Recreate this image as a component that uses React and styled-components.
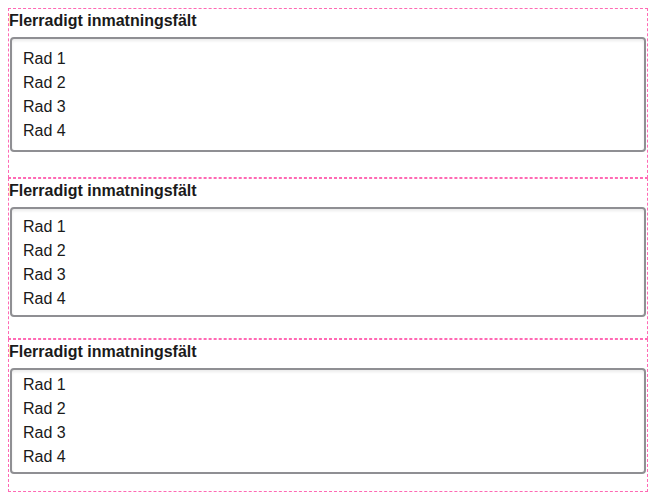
import React from 'react'
import { styled, createGlobalStyle } from 'styled-components';

const GlobalStyle = createGlobalStyle`
  html, body {
    overflow: hidden;
  }
  body {
    margin: 8px 0 0 8px;
    background: #fff;
    font-family: "Liberation Sans", Arial, sans-serif;
    color: #1a1a1a;
  }
`

const fields = [
  { id: 'field-large', pad: '8px 11px 7px', space: 25 },
  { id: 'field-medium', pad: '6px 11px 4px', space: 21 },
  { id: 'field-small', pad: '3px 11px 3px', space: 17 },
]

const rows = 'Rad 1\nRad 2\nRad 3\nRad 4'

export default function App() {
  return (
    <>
      <GlobalStyle />
      <Stack>
        {fields.map((f) => (
          <Field key={f.id} $space={f.space}>
            <Label htmlFor={f.id}>Flerradigt inmatningsfält</Label>
            <TextArea id={f.id} rows={4} $pad={f.pad} defaultValue={rows} />
          </Field>
        ))}
      </Stack>
    </>
  )
}

const Stack = styled.div`
  display: flex;
  flex-direction: column;
  width: 640px;
`

const Field = styled.div`
  display: flex;
  flex-direction: column;
  box-sizing: border-box;
  border: 1px dashed #ff69b4;
  padding-bottom: ${(p) => p.$space}px;
`

const Label = styled.label`
  display: block;
  font-size: 16px;
  font-weight: 700;
  line-height: 20px;
  padding-top: 2px;
  margin-bottom: 6px;
  color: #1a1a1a;
`

const TextArea = styled.textarea`
  display: block;
  box-sizing: border-box;
  margin: 0 1px;
  width: 636px;
  padding: ${(p) => p.$pad};
  border: 2px solid #8f8f93;
  border-radius: 4px;
  box-shadow: inset 0 2px 3px rgba(0, 0, 0, 0.08);
  font-family: "Liberation Sans", Arial, sans-serif;
  font-size: 16px;
  line-height: 24px;
  color: #1a1a1a;
  background: #fff;
  resize: none;
  overflow: hidden;
  outline: none;
`
